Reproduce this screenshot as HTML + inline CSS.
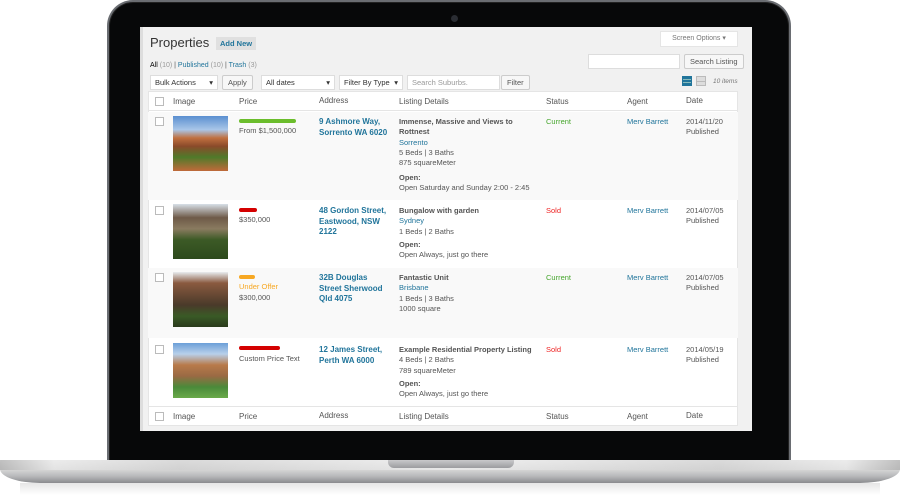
<!DOCTYPE html>
<html><head><meta charset="utf-8"><style>
*{margin:0;padding:0;box-sizing:border-box}
body{width:900px;height:495px;background:#fff;position:relative;overflow:hidden;font-family:"Liberation Sans",sans-serif}
.bezel{position:absolute;left:107px;top:0;width:684px;height:464px;background:#070809;border-radius:26px 26px 0 0;border:2px solid #6a6d72;border-bottom:none;box-shadow:inset 0 0 0 1px #222}
.cam{position:absolute;left:451px;top:15px;width:7px;height:7px;border-radius:50%;background:#2a2d33}
.screen{position:absolute;left:140px;top:27px;width:612px;height:404px;background:#f1f1f1;overflow:hidden;box-shadow:inset 3px 0 0 #ddd}
.base{position:absolute;left:0;top:460px;width:900px;height:23px;background:linear-gradient(to bottom,#f4f4f4 0,#d8d8d8 40%,#b8b9bb 70%,#8a8b8e 100%);border-radius:2px 2px 40px 40px/2px 2px 14px 14px}
.baseh{position:absolute;left:0;top:460px;width:900px;height:10px;background:linear-gradient(to right,#aaa 0,#e8e8e8 6%,#cfcfcf 20%,#eee 50%,#cfcfcf 80%,#e8e8e8 94%,#aaa 100%);opacity:.7}
.notch{position:absolute;left:388px;top:460px;width:126px;height:8px;background:linear-gradient(#c9c9cb,#9b9c9f);border-radius:0 0 6px 6px}
.shadow{position:absolute;left:20px;top:483px;width:860px;height:12px;background:linear-gradient(#e6e6e6,#fff)}
.a{position:absolute;font-size:7.5px;color:#555;white-space:nowrap;line-height:10px}
.l{color:#21759b}
.b{font-weight:bold}
.btn{position:absolute;background:#f7f7f7;border:1px solid #ccc;border-radius:2px;font-size:7.5px;color:#555;line-height:14px;padding:0 5px}
.in{position:absolute;background:#fff;border:1px solid #ddd;font-size:7.5px;color:#999;line-height:14px;padding:0 4px}
.row{position:absolute;left:8px;width:590px}
.cb{position:absolute;width:9px;height:9px;border:1px solid #bbb;background:#fff}
.img{position:absolute;left:33px;width:55px;height:55px}
.bar{position:absolute;height:4px;border-radius:2px}
#c{position:absolute;left:-3px;top:0;width:612px;height:404px}
</style></head><body>
<div class="bezel"></div>
<div class="cam"></div>
<div class="screen"><div id="c">
<div style="position:absolute;left:13px;top:8px;font-size:13px;color:#333">Properties</div>
<div style="position:absolute;left:79px;top:10px;background:#e0e0e0;font-size:7.5px;color:#21759b;font-weight:bold;padding:2px 4px">Add New</div>
<div style="position:absolute;left:523px;top:4px;width:78px;height:16px;background:#fff;border:1px solid #e5e5e5;font-size:7px;color:#777;text-align:center;line-height:14px">Screen Options ▾</div>
<div class="in" style="left:451px;top:27px;width:92px;height:15px"></div>
<div class="btn" style="left:547px;top:27px;height:15px">Search Listing</div>
<div class="a" style="left:13px;top:34px;font-size:7px"><span style="color:#000">All</span> <span style="color:#999">(10)</span> | <span class="l">Published</span> <span style="color:#999">(10)</span> | <span class="l">Trash</span> <span style="color:#999">(3)</span></div>
<div class="in" style="left:13px;top:48px;width:68px;height:15px;color:#333">Bulk Actions <span style="float:right">▾</span></div>
<div class="btn" style="left:85px;top:48px;height:15px">Apply</div>
<div class="in" style="left:124px;top:48px;width:74px;height:15px;color:#333">All dates <span style="float:right">▾</span></div>
<div class="in" style="left:202px;top:48px;width:64px;height:15px;color:#333">Filter By Type <span style="float:right">▾</span></div>
<div class="in" style="left:270px;top:48px;width:93px;height:15px">Search Suburbs.</div>
<div class="btn" style="left:364px;top:48px;height:15px">Filter</div>
<div style="position:absolute;left:545px;top:49px;width:10px;height:10px;border:1px solid #21759b;background:repeating-linear-gradient(#21759b 0 2px,#8bb 2px 3px)"></div>
<div style="position:absolute;left:559px;top:49px;width:10px;height:10px;border:1px solid #bbb;background:linear-gradient(#ddd 0 4px,#bbb 4px 5px,#ddd 5px)"></div>
<div class="a" style="left:576px;top:50px;font-size:6.5px;font-style:italic;color:#777">10 items</div>

<div style="position:absolute;left:11px;top:64px;width:590px;height:335px;background:#fff;border:1px solid #e5e5e5"></div>
<div class="row" style="left:11px;top:64px;height:20px;border-bottom:1px solid #e5e5e5"></div>
<div class="cb" style="left:18px;top:70px"></div>
<div class="a" style="left:36px;top:70px;font-size:8px">Image</div>
<div class="a" style="left:102px;top:70px;font-size:8px">Price</div>
<div class="a" style="left:182px;top:69px;font-size:8px">Address</div>
<div class="a" style="left:262px;top:70px;font-size:8px">Listing Details</div>
<div class="a" style="left:409px;top:70px;font-size:8px">Status</div>
<div class="a" style="left:490px;top:70px;font-size:8px">Agent</div>
<div class="a" style="left:549px;top:69px;font-size:8px">Date</div>

<div class="row" style="left:11px;top:85px;height:88px;background:#f9f9f9"></div>
<div class="row" style="left:11px;top:241px;height:70px;background:#f9f9f9"></div>

<div class="cb" style="left:18px;top:90px"></div>
<div class="img" style="left:36px;top:89px;background:linear-gradient(#5a8fd0 0,#a9c6e8 25%,#c0703f 40%,#8a4a2a 55%,#4f7a2a 75%,#c06a3a 100%)"></div>
<div class="bar" style="left:102px;top:92px;width:57px;background:#6bbd2c"></div>
<div class="a" style="left:102px;top:99px">From $1,500,000</div>
<div class="a l b" style="left:182px;top:90px;font-size:8px;line-height:10.5px">9 Ashmore Way,<br>Sorrento WA 6020</div>
<div class="a" style="left:262px;top:90px;line-height:10.3px"><b>Immense, Massive and Views to<br>Rottnest</b><br><span class="l">Sorrento</span><br>5 Beds | 3 Baths<br>875 squareMeter</div>
<div class="a" style="left:262px;top:146px;line-height:10.3px"><b>Open:</b><br>Open Saturday and Sunday 2:00 - 2:45</div>
<div class="a" style="left:409px;top:90px;color:#46a62d">Current</div>
<div class="a l" style="left:490px;top:90px">Merv Barrett</div>
<div class="a" style="left:549px;top:90px;line-height:10.3px">2014/11/20<br>Published</div>

<div class="cb" style="left:18px;top:179px"></div>
<div class="img" style="left:36px;top:177px;background:linear-gradient(#d8e0e8 0,#6e5a48 25%,#8a7b60 45%,#3c5a26 65%,#2d4a1c 100%)"></div>
<div class="bar" style="left:102px;top:181px;width:18px;background:#d40000"></div>
<div class="a" style="left:102px;top:188px">$350,000</div>
<div class="a l b" style="left:182px;top:179px;font-size:8px;line-height:10.5px">48 Gordon Street,<br>Eastwood, NSW<br>2122</div>
<div class="a" style="left:262px;top:179px;line-height:10.3px"><b>Bungalow with garden</b><br><span class="l">Sydney</span><br>1 Beds | 2 Baths</div>
<div class="a" style="left:262px;top:213px;line-height:10.3px"><b>Open:</b><br>Open Always, just go there</div>
<div class="a" style="left:409px;top:179px;color:#e22">Sold</div>
<div class="a l" style="left:490px;top:179px">Merv Barrett</div>
<div class="a" style="left:549px;top:179px;line-height:10.3px">2014/07/05<br>Published</div>

<div class="cb" style="left:18px;top:246px"></div>
<div class="img" style="left:36px;top:245px;background:linear-gradient(#e8ecef 0,#8a5a40 20%,#6a4a35 40%,#4a3a2a 60%,#3a5a26 80%,#2a3a1c 100%)"></div>
<div class="bar" style="left:102px;top:248px;width:16px;background:#f7a823"></div>
<div class="a" style="left:102px;top:255px;color:#f7a823">Under Offer</div>
<div class="a" style="left:102px;top:266px">$300,000</div>
<div class="a l b" style="left:182px;top:246px;font-size:8px;line-height:10.5px">32B Douglas<br>Street Sherwood<br>Qld 4075</div>
<div class="a" style="left:262px;top:246px;line-height:10.3px"><b>Fantastic Unit</b><br><span class="l">Brisbane</span><br>1 Beds | 3 Baths<br>1000 square</div>
<div class="a" style="left:409px;top:246px;color:#46a62d">Current</div>
<div class="a l" style="left:490px;top:246px">Merv Barrett</div>
<div class="a" style="left:549px;top:246px;line-height:10.3px">2014/07/05<br>Published</div>

<div class="cb" style="left:18px;top:318px"></div>
<div class="img" style="left:36px;top:316px;background:linear-gradient(#6c9fd8 0,#b8d0ea 20%,#b87a4a 40%,#9a6a44 60%,#4a8a3a 80%,#6aaa4a 100%)"></div>
<div class="bar" style="left:102px;top:319px;width:41px;background:#d40000"></div>
<div class="a" style="left:102px;top:327px">Custom Price Text</div>
<div class="a l b" style="left:182px;top:318px;font-size:8px;line-height:10.5px">12 James Street,<br>Perth WA 6000</div>
<div class="a" style="left:262px;top:318px;line-height:10.3px"><b>Example Residential Property Listing</b><br>4 Beds | 2 Baths<br>789 squareMeter</div>
<div class="a" style="left:262px;top:352px;line-height:10.3px"><b>Open:</b><br>Open Always, just go there</div>
<div class="a" style="left:409px;top:318px;color:#e22">Sold</div>
<div class="a l" style="left:490px;top:318px">Merv Barrett</div>
<div class="a" style="left:549px;top:318px;line-height:10.3px">2014/05/19<br>Published</div>

<div class="row" style="left:11px;top:379px;height:20px;border-top:1px solid #e5e5e5"></div>
<div class="cb" style="left:18px;top:385px"></div>
<div class="a" style="left:36px;top:385px;font-size:8px">Image</div>
<div class="a" style="left:102px;top:385px;font-size:8px">Price</div>
<div class="a" style="left:182px;top:384px;font-size:8px">Address</div>
<div class="a" style="left:262px;top:385px;font-size:8px">Listing Details</div>
<div class="a" style="left:409px;top:385px;font-size:8px">Status</div>
<div class="a" style="left:490px;top:385px;font-size:8px">Agent</div>
<div class="a" style="left:549px;top:384px;font-size:8px">Date</div>
</div></div>
<div class="shadow"></div>
<div class="base"></div>
<div class="baseh"></div>
<div class="notch"></div>
</body></html>
